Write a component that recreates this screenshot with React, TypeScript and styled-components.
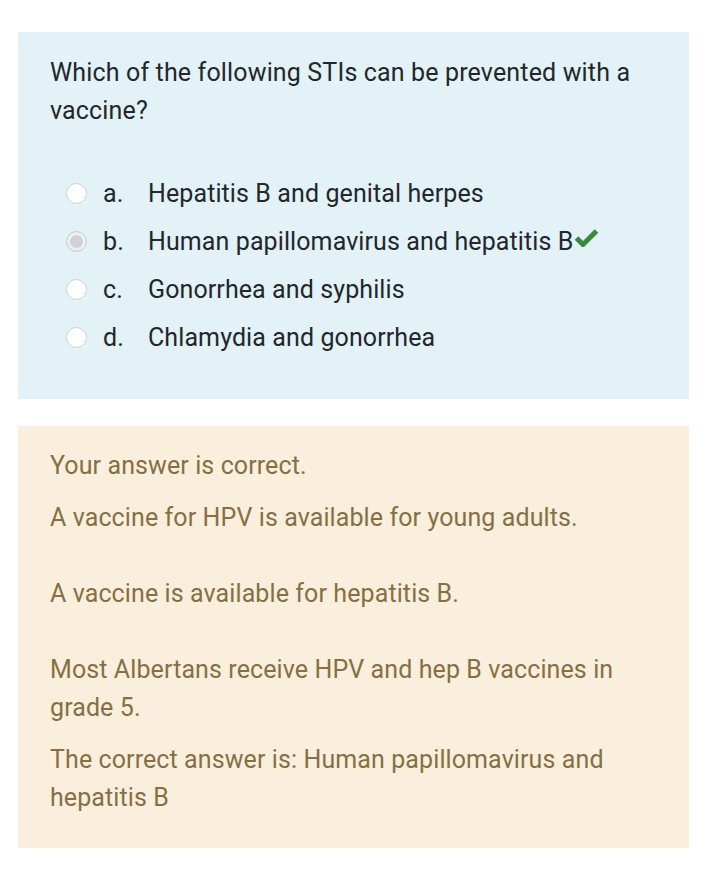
import styled, { createGlobalStyle } from "styled-components"

const GlobalStyle = createGlobalStyle`
  body {
    margin: 0;
    background: #ffffff;
    font-family: Roboto, "Noto Sans", sans-serif;
  }
`

const Page = styled.div`
  display: flex;
  flex-direction: column;
  gap: 27px;
  padding: 32px 25px 40px 18px;
`

const QuestionCard = styled.div`
  background: #e2f2f7;
  padding: 22px 32px 38px;
  color: #22272b;
`

const QuestionText = styled.p`
  margin: 0;
  font-size: 25px;
  letter-spacing: 0.15px;
  line-height: 38px;
`

const Answers = styled.div`
  display: flex;
  flex-direction: column;
  margin-top: 39px;
  padding-left: 16px;
`

const Option = styled.label`
  display: flex;
  align-items: center;
  height: 48px;
  font-size: 25px;
  letter-spacing: 0.1px;
`

const Radio = styled.span<{ $checked?: boolean }>`
  box-sizing: border-box;
  width: 21px;
  height: 21px;
  border-radius: 50%;
  border: 1.5px solid #cdd0d3;
  background: ${p => (p.$checked ? "#cfd2d4" : "#ffffff")};
  box-shadow: ${p => (p.$checked ? "inset 0 0 0 3px #eef0f1" : "none")};
  flex-shrink: 0;
`

const Letter = styled.span`
  width: 45px;
  margin-left: 16px;
`

const Check = styled.svg`
  width: 25px;
  height: 19px;
  margin-left: 1px;
  margin-top: -7px;
`

const FeedbackCard = styled.div`
  background: #faefdc;
  padding: 21px 32px 31px;
  color: #857044;
  font-size: 25px;
  letter-spacing: 0.1px;
  line-height: 38px;
  display: flex;
  flex-direction: column;
  gap: 14px;
`

const Note = styled.p`
  margin: 0;
`

const Explanation = styled.div`
  display: flex;
  flex-direction: column;
  gap: 38px;
`

const options = [
  { letter: "a.", text: "Hepatitis B and genital herpes" },
  { letter: "b.", text: "Human papillomavirus and hepatitis B", checked: true },
  { letter: "c.", text: "Gonorrhea and syphilis" },
  { letter: "d.", text: "Chlamydia and gonorrhea" },
]

const App = () => {
  return (
    <Page>
      <GlobalStyle />
      <QuestionCard>
        <QuestionText>Which of the following STIs can be prevented with a vaccine?</QuestionText>
        <Answers>
          {options.map(o => (
            <Option key={o.letter}>
              <Radio $checked={o.checked} />
              <Letter>{o.letter}</Letter>
              <span>{o.text}</span>
              {o.checked && (
                <Check viewBox="0 0 25 19">
                  <path d="M2.5 10 L9 16.5 L22.5 3" fill="none" stroke="#3a8a3c" strokeWidth="5" strokeLinejoin="round" />
                </Check>
              )}
            </Option>
          ))}
        </Answers>
      </QuestionCard>
      <FeedbackCard>
        <Note>Your answer is correct.</Note>
        <Explanation>
          <Note>A vaccine for HPV is available for young adults.</Note>
          <Note>A vaccine is available for hepatitis B.</Note>
          <Note>Most Albertans receive HPV and hep B vaccines in grade 5.</Note>
        </Explanation>
        <Note>The correct answer is: Human papillomavirus and hepatitis B</Note>
      </FeedbackCard>
    </Page>
  )
}

export default App
